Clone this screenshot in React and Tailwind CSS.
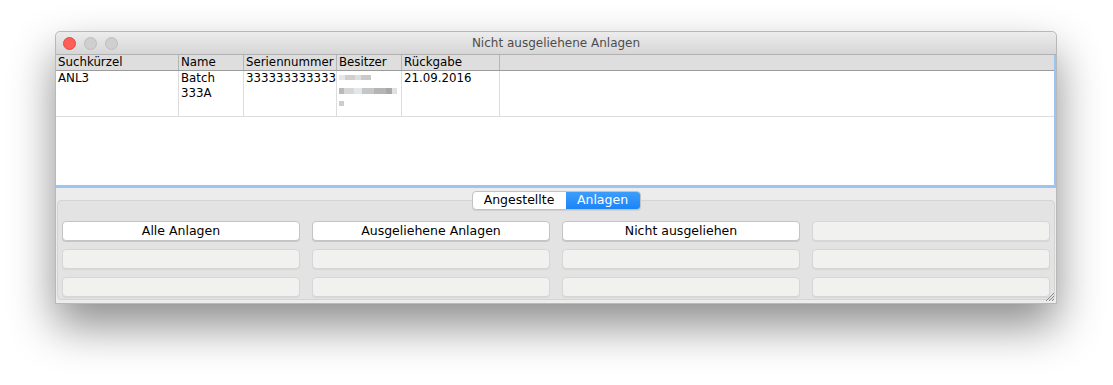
import React from 'react';

const font = { fontFamily: '"DejaVu Sans", "Liberation Sans", sans-serif' };

const columns = [
  { label: 'Suchkürzel', w: 'w-[123px]' },
  { label: 'Name', w: 'w-[65px]' },
  { label: 'Seriennummer', w: 'w-[93px]' },
  { label: 'Besitzer', w: 'w-[65px]' },
  { label: 'Rückgabe', w: 'w-[98px]' },
];

function Blurred() {
  // pixelated owner name
  return (
    <div className="flex flex-col gap-[3px] pt-[4px]">
      <div className="flex">
        <div className="w-[6px] h-[5px] bg-[#e6e6e6]" />
        <div className="w-[10px] h-[5px] bg-[#cfcfcf]" />
        <div className="w-[6px] h-[5px] bg-[#dedede]" />
        <div className="w-[10px] h-[5px] bg-[#c9c9c9]" />
      </div>
      <div className="flex mt-[5px]">
        <div className="w-[5px] h-[6px] bg-[#b9b9b9]" />
        <div className="w-[10px] h-[6px] bg-[#d7d7d7]" />
        <div className="w-[8px] h-[6px] bg-[#e2e7ea]" />
        <div className="w-[12px] h-[6px] bg-[#c6c6c6]" />
        <div className="w-[12px] h-[6px] bg-[#b5b5b5]" />
        <div className="w-[6px] h-[6px] bg-[#a8a8a8]" />
        <div className="w-[5px] h-[6px] bg-[#e0e0e0]" />
      </div>
      <div className="w-[5px] h-[5px] bg-[#cdcdcd] mt-[4px]" />
    </div>
  );
}

function Btn({ label, active }) {
  return (
    <div
      className={`flex-1 h-[20px] rounded-[4px] flex items-center justify-center text-[12.5px] text-black ${
        active
          ? 'bg-white border border-[#c4c4c4] shadow-[0_1px_0_rgba(0,0,0,0.12)]'
          : 'bg-[#f1f1f0] border border-[#d6d6d6] shadow-[0_1px_0_rgba(0,0,0,0.05)]'
      }`}
    >
      {label}
    </div>
  );
}

export default function App() {
  const rows = [
    ['Alle Anlagen', 'Ausgeliehene Anlagen', 'Nicht ausgeliehen', null],
    [null, null, null, null],
    [null, null, null, null],
  ];

  return (
    <div className="w-[1113px] h-[385px] bg-white pt-[31px] pl-[55px]" style={font}>
      <div className="relative w-[1002px] h-[273px] flex flex-col rounded-t-[5px] bg-[#ececec] border border-[#b8b8b8] shadow-[0_22px_45px_rgba(0,0,0,0.45)]">
        {/* title bar */}
        <div className="h-[23px] flex items-center rounded-t-[5px] bg-gradient-to-b from-[#ececec] to-[#d6d6d6] border-b border-[#b1b1b1] relative">
          <div className="flex gap-[8px] pl-[7px]">
            <div className="w-[13px] h-[13px] rounded-full bg-[#fc5f57] border border-[#de4a42]" />
            <div className="w-[13px] h-[13px] rounded-full bg-[#cfcfcf] border border-[#bdbdbd]" />
            <div className="w-[13px] h-[13px] rounded-full bg-[#cfcfcf] border border-[#bdbdbd]" />
          </div>
          <div className="absolute inset-0 flex items-center justify-center text-[12px] text-[#4d4d4d]">
            Nicht ausgeliehene Anlagen
          </div>
        </div>

        {/* table */}
        <div className="h-[133px] bg-white flex flex-col border-r-2 border-b-[3px] border-[#9dc3f3] text-[11.8px] text-black">
          <div className="h-[16px] flex bg-[#dedede] border-b border-[#9c9c9c]">
            {columns.map((c) => (
              <div key={c.label} className={`${c.w} border-r border-[#b5b5b5] pl-[2px] leading-[15px] whitespace-nowrap overflow-hidden`}>
                {c.label}
              </div>
            ))}
            <div className="flex-1" />
          </div>
          <div className="h-[46px] flex border-b border-[#dcdcdc] leading-[15px]">
            <div className="w-[123px] border-r border-[#dcdcdc] pl-[2px]">ANL3</div>
            <div className="w-[65px] border-r border-[#dcdcdc] pl-[2px]">
              Batch
              <br />
              333A
            </div>
            <div className="w-[93px] border-r border-[#dcdcdc] pl-[2px] overflow-hidden whitespace-nowrap">
              333333333333
            </div>
            <div className="w-[65px] border-r border-[#dcdcdc] pl-[2px]">
              <Blurred />
            </div>
            <div className="w-[98px] border-r border-[#dcdcdc] pl-[2px]">21.09.2016</div>
            <div className="flex-1" />
          </div>
        </div>

        {/* tabs */}
        <div className="flex-1 flex flex-col pt-[3px] px-[1px] pb-[3px]">
          <div className="relative z-10 flex justify-center -mb-[10px] text-[12.5px]">
            <div className="flex h-[19px] rounded-[4px] border border-[#c2c2c2] bg-white shadow-[0_1px_0_rgba(0,0,0,0.08)] overflow-hidden">
              <div className="w-[93px] flex items-center justify-center text-black">Angestellte</div>
              <div className="w-[74px] flex items-center justify-center bg-gradient-to-b from-[#3c9dfb] to-[#1a84f7] text-white">
                Anlagen
              </div>
            </div>
          </div>
          <div className="flex-1 rounded-[4px] bg-[#e3e3e3] border border-[#d4d4d4] pt-[20px] px-[4px] flex flex-col gap-[8px]">
            {rows.map((r, i) => (
              <div key={i} className="flex gap-[12px]">
                {r.map((label, j) => (
                  <Btn key={j} label={label} active={!!label} />
                ))}
              </div>
            ))}
          </div>
        </div>

        {/* resize grip */}
        <svg className="absolute right-[1px] bottom-[1px]" width="12" height="12" viewBox="0 0 12 12">
          <path d="M11 3 L3 11 M11 6 L6 11 M11 9 L9 11" stroke="#8a8a8a" strokeWidth="1" />
        </svg>
      </div>
    </div>
  );
}
